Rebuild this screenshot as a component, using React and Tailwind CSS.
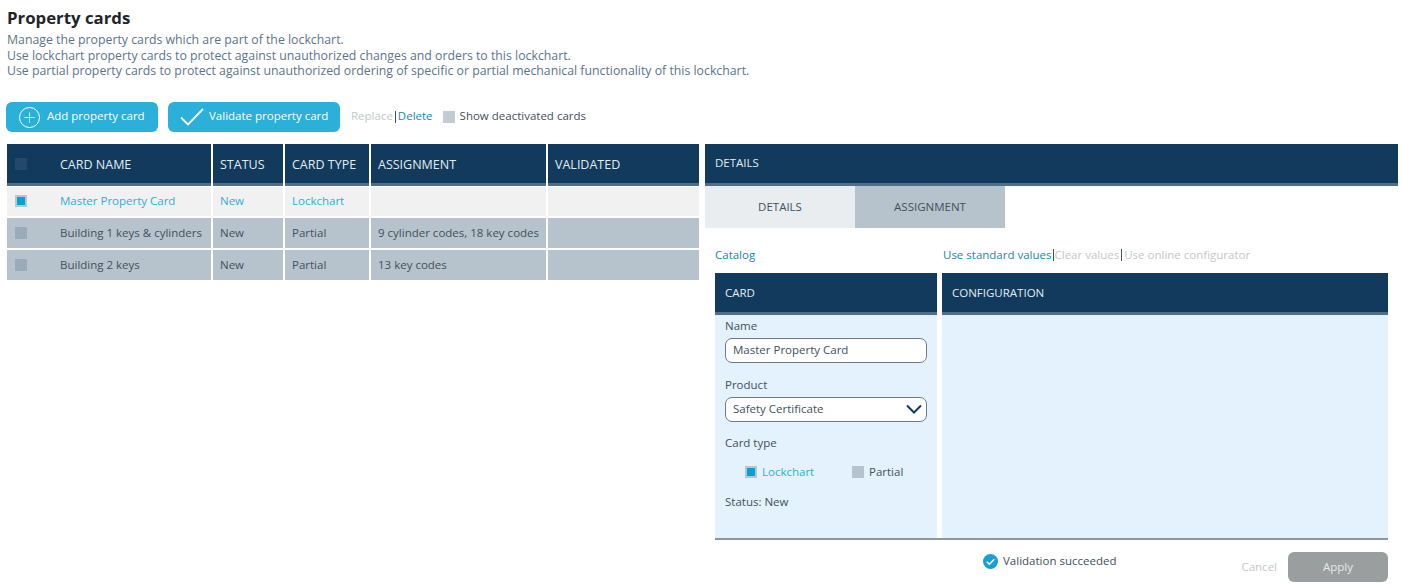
import { Plus } from "lucide-react";

const columns = [
  { label: "CARD NAME", width: "w-[204px]", pad: "pl-[53px]" },
  { label: "STATUS", width: "w-[70px]", pad: "pl-[7px]" },
  { label: "CARD TYPE", width: "w-[84px]", pad: "pl-[7px]" },
  { label: "ASSIGNMENT", width: "w-[175px]", pad: "pl-[7px]" },
  { label: "VALIDATED", width: "flex-1", pad: "pl-[7px]" },
];

const rows = [
  { name: "Master Property Card", status: "New", type: "Lockchart", assignment: "", active: true },
  { name: "Building 1 keys & cylinders", status: "New", type: "Partial", assignment: "9 cylinder codes, 18 key codes" },
  { name: "Building 2 keys", status: "New", type: "Partial", assignment: "13 key codes" },
];

function Box({ checked, className = "bg-[#9aabba]" }) {
  if (checked) {
    return (
      <span className="flex h-3 w-3 shrink-0 items-center justify-center bg-[#b9c6d0]">
        <span className="h-2 w-2 bg-[#00a3d6]"></span>
      </span>
    );
  }
  return <span className={`h-3 w-3 shrink-0 ${className}`}></span>;
}

function HeaderBar({ children, className = "" }) {
  return (
    <div className={`flex h-[42px] items-center border-b-[3px] border-b-[#4f6f8a] bg-[#113a5d] text-[#e4ebf0] ${className}`}>
      {children}
    </div>
  );
}

export default function App() {
  return (
    <div className="h-[585px] w-[1402px] overflow-hidden bg-white pl-[7px] font-['Open_Sans','Noto_Sans',sans-serif] text-[11.5px] text-[#44505a]">
      {/* Title */}
      <h1 className="pt-[7px] text-[16.8px] leading-[22px] font-bold text-[#1f2429]">Property cards</h1>
      <div className="mt-[3px] text-[12.3px] leading-[15.5px] text-[#5d7488]">
        <p>Manage the property cards which are part of the lockchart.</p>
        <p>Use lockchart property cards to protect against unauthorized changes and orders to this lockchart.</p>
        <p>Use partial property cards to protect against unauthorized ordering of specific or partial mechanical functionality of this lockchart.</p>
      </div>

      {/* Toolbar */}
      <div className="mt-[23.5px] -ml-px flex h-[30px] items-center">
        <button className="flex h-[30px] w-[152px] items-center rounded-[6px] bg-[#2ab0d9] pl-[13px] text-white">
          <span className="flex h-[21px] w-[21px] items-center justify-center rounded-full border border-white">
            <Plus size={17} strokeWidth={1} />
          </span>
          <span className="mb-[2px] ml-[7px]">Add property card</span>
        </button>
        <button className="ml-[10px] flex h-[30px] w-[172px] items-center rounded-[6px] bg-[#2ab0d9] pl-[12px] text-white">
          <svg viewBox="0 0 24 18" className="h-[18px] w-[24px]">
            <path d="M1 9.5L8 16.5L23 1" fill="none" stroke="#fff" strokeWidth="1.8" />
          </svg>
          <span className="mb-[2px] ml-[5px]">Validate property card</span>
        </button>
        <span className="mb-[2px] ml-[11px] text-[#c4c8cb]">Replace</span>
        <span className="mx-[2px] h-[12px] w-px bg-[#44505a]"></span>
        <span className="mb-[2px] text-[#2088a8]">Delete</span>
        <Box className="ml-[10px] bg-[#c3ccd5]" />
        <span className="mb-[2px] ml-[5px]">Show deactivated cards</span>
      </div>

      <div className="mt-[12px] flex gap-[6px]">
        {/* Card table */}
        <div className="w-[692px] shrink-0">
          <div className="flex gap-[2px]">
            {columns.map((col, i) => (
              <HeaderBar key={col.label} className={`relative pt-[3px] text-[12.5px] ${col.width} ${col.pad}`}>
                {i === 0 && <span className="absolute left-[8px] top-[14px] h-3 w-3 bg-[#22486a]"></span>}
                {col.label}
              </HeaderBar>
            ))}
          </div>
          <div className="mt-[1px] flex flex-col gap-[2px]">
            {rows.map((row) => {
              const cell = `flex items-center ${row.active ? "h-[29px] bg-[#f1f1f1] pb-[1px] text-[#2ab0d9]" : "h-[30px] bg-[#b6c3cd]"}`;
              return (
                <div key={row.name} className="flex gap-[2px]">
                  <div className={`${cell} w-[204px] pl-[8px]`}>
                    <Box checked={row.active} />
                    <span className="ml-[33px] whitespace-nowrap">{row.name}</span>
                  </div>
                  <div className={`${cell} w-[70px] pl-[7px]`}>{row.status}</div>
                  <div className={`${cell} w-[84px] pl-[7px]`}>{row.type}</div>
                  <div className={`${cell} w-[175px] whitespace-nowrap pl-[7px]`}>{row.assignment}</div>
                  <div className={`${cell} flex-1`}></div>
                </div>
              );
            })}
          </div>
        </div>

        {/* Details */}
        <div className="w-[693px] shrink-0">
          <HeaderBar className="pb-[2px] pl-[10px]">DETAILS</HeaderBar>
          <div className="flex">
            <div className="flex h-[42px] w-[150px] items-center justify-center bg-[#e9edf0]">DETAILS</div>
            <div className="flex h-[42px] w-[150px] items-center justify-center bg-[#b6c3cd]">ASSIGNMENT</div>
          </div>

          <div className="px-[10px]">
            <div className="mt-[18px] flex h-[18px] items-center">
              <span className="w-[228px] text-[#2088a8]">Catalog</span>
              <span className="text-[#2088a8]">Use standard values</span>
              <span className="mx-[1px] h-[12px] w-px bg-[#44505a]"></span>
              <span className="text-[#c4c8cb]">Clear values</span>
              <span className="mx-[2px] h-[12px] w-px bg-[#44505a]"></span>
              <span className="text-[#c4c8cb]">Use online configurator</span>
            </div>

            <div className="mt-[9px] flex gap-[5px] border-b-[2px] border-b-[#8c969e]">
              <div className="w-[222px]">
                <HeaderBar className="pl-[10px]">CARD</HeaderBar>
                <div className="h-[223px] bg-[#e3f2fd] px-[10px] pt-[2px]">
                  <label className="block leading-[17px]">Name</label>
                  <div className="mt-[4px] flex h-[25px] items-center rounded-[7px] border border-[#6d7a85] bg-white pb-[1px] pl-[7px]">
                    Master Property Card
                  </div>
                  <label className="mt-[13px] block leading-[17px]">Product</label>
                  <div className="mt-[4px] flex h-[25px] items-center justify-between rounded-[7px] border border-[#6d7a85] bg-white pb-[1px] pl-[7px] pr-[4px]">
                    Safety Certificate
                    <svg viewBox="0 0 16 10" className="h-[10px] w-[16px]">
                      <path d="M1 1.5L8 8.5L15 1.5" fill="none" stroke="#113a5d" strokeWidth="2" />
                    </svg>
                  </div>
                  <label className="mt-[12px] block leading-[17px]">Card type</label>
                  <div className="mt-[12px] flex h-[18px] items-center pl-[20px]">
                    <Box checked />
                    <span className="ml-[5px] w-[90px] text-[#2ab0d9]">Lockchart</span>
                    <Box className="bg-[#b6c3cd]" />
                    <span className="ml-[5px]">Partial</span>
                  </div>
                  <p className="mt-[12px] leading-[17px]">Status: New</p>
                </div>
              </div>
              <div className="flex-1">
                <HeaderBar className="pl-[10px]">CONFIGURATION</HeaderBar>
                <div className="h-[223px] bg-[#e3f2fd]"></div>
              </div>
            </div>

            <div className="mt-[12px] flex items-start">
              <svg viewBox="0 0 16 16" className="ml-[268px] mt-[2px] h-[15px] w-[15px]">
                <circle cx="8" cy="8" r="8" fill="#1a9fd4" />
                <path d="M4 8.3l2.8 2.7L12 5.6" fill="none" stroke="#fff" strokeWidth="1.6" />
              </svg>
              <span className="ml-[5px]">Validation succeeded</span>
              <span className="ml-auto mt-[6px] text-[#c4c8cb]">Cancel</span>
              <button className="ml-[11px] h-[30px] w-[100px] rounded-[6px] bg-[#9a9e9f] text-[#e8e8e8]">Apply</button>
            </div>
          </div>
        </div>
      </div>
    </div>
  );
}
